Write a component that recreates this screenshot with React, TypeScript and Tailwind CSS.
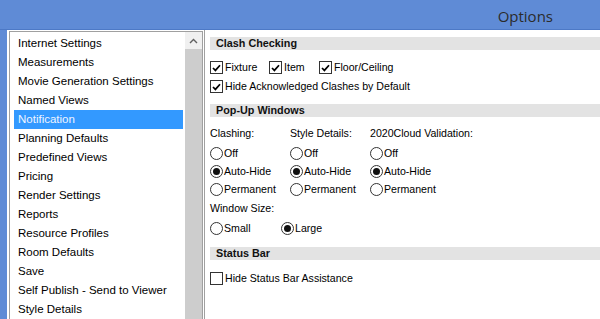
import React from "react";

const items = [
  "Internet Settings",
  "Measurements",
  "Movie Generation Settings",
  "Named Views",
  "Notification",
  "Planning Defaults",
  "Predefined Views",
  "Pricing",
  "Render Settings",
  "Reports",
  "Resource Profiles",
  "Room Defaults",
  "Save",
  "Self Publish - Send to Viewer",
  "Style Details",
];

function Check({ on, label }: { on?: boolean; label: string }) {
  return (
    <div className="flex items-center h-[13px]">
      <div className="w-[13px] h-[13px] border border-[#333] bg-white flex items-center justify-center shrink-0">
        {on && (
          <svg width="9" height="8" viewBox="0 0 9 8">
            <path d="M1 4 L3.4 6.4 L8 1.2" fill="none" stroke="#000" strokeWidth="1.7" />
          </svg>
        )}
      </div>
      <span className="ml-[2px] whitespace-nowrap">{label}</span>
    </div>
  );
}

function Radio({ on, label }: { on?: boolean; label: string }) {
  return (
    <div className="flex items-center">
      <div className="w-[13px] h-[13px] rounded-full border border-[#333] bg-white flex items-center justify-center shrink-0">
        {on && <div className="w-[7px] h-[7px] rounded-full bg-[#111]" />}
      </div>
      <span className="ml-[1px] whitespace-nowrap">{label}</span>
    </div>
  );
}

function Header({ title }: { title: string }) {
  return (
    <div className="h-[13px] bg-[#e3e3e3] pl-[6px] font-bold text-[10.8px] leading-[13px] text-[#111]">
      {title}
    </div>
  );
}

export default function App() {
  const cols = ["Clashing:", "Style Details:", "2020Cloud Validation:"];

  return (
    <div className="w-[600px] h-[319px] bg-white overflow-hidden flex flex-col font-['Liberation_Sans',Arial,sans-serif]">
      {/* title bar */}
      <div className="h-[30px] shrink-0 bg-[#5f8bd6] border-b border-[#4d79c6] flex items-center justify-end pr-[47px] pt-[3px]">
        <span className="font-['Open_Sans',sans-serif] text-[15px] text-[#2b2b2b] leading-none">Options</span>
      </div>

      <div className="flex flex-1 min-h-0">
        <div className="w-[7px] bg-[#5f8bd6] shrink-0" />

        {/* list */}
        <div className="ml-[2px] mt-[1px] w-[194px] shrink-0 border-l border-t border-r border-[#a0a0a0] flex">
          <div className="flex-1 pt-[2px] pl-[4px] text-[11.5px] text-black">
            {items.map((it) => (
              <div
                key={it}
                className={`h-[19px] leading-[19px] pl-[4px] whitespace-nowrap ${
                  it === "Notification" ? "bg-[#3399ff] text-[#eef4ff]" : ""
                }`}
              >
                {it}
              </div>
            ))}
          </div>
          <div className="w-[17px] ml-[2px] flex flex-col shrink-0">
            <div className="h-[17px] bg-[#f0f0f0] flex items-center justify-center">
              <svg width="9" height="6" viewBox="0 0 9 6">
                <path d="M1 5 L4.5 1.5 L8 5" fill="none" stroke="#606060" strokeWidth="1.4" />
              </svg>
            </div>
            <div className="flex-1 bg-[#cdcdcd]" />
          </div>
        </div>

        {/* settings panel */}
        <div className="ml-[1px] flex-1 border-l border-[#a0a0a0] pl-[5px] pt-[7px] text-[10.6px] text-black">
          <Header title="Clash Checking" />
          <div className="mt-[11px] flex">
            <div className="w-[59px]">
              <Check on label="Fixture" />
            </div>
            <div className="w-[50px]">
              <Check on label="Item" />
            </div>
            <Check on label="Floor/Ceiling" />
          </div>
          <div className="mt-[6px]">
            <Check on label="Hide Acknowledged Clashes by Default" />
          </div>

          <div className="mt-[11px]">
            <Header title="Pop-Up Windows" />
          </div>
          <div className="mt-[10px] flex h-[13px] items-center">
            {cols.map((c) => (
              <div key={c} className="w-[80px] whitespace-nowrap">
                {c}
              </div>
            ))}
          </div>
          <div className="mt-[5px]">
            {["Off", "Auto-Hide", "Permanent"].map((opt) => (
              <div key={opt} className="flex h-[18px] items-center">
                {cols.map((c) => (
                  <div key={c} className="w-[80px]">
                    <Radio on={opt === "Auto-Hide"} label={opt} />
                  </div>
                ))}
              </div>
            ))}
          </div>
          <div className="mt-[1px] h-[18px] flex items-center">Window Size:</div>
          <div className="mt-[2px] h-[18px] flex items-center">
            <div className="w-[71px]">
              <Radio label="Small" />
            </div>
            <Radio on label="Large" />
          </div>

          <div className="mt-[9px]">
            <Header title="Status Bar" />
          </div>
          <div className="mt-[12px]">
            <Check label="Hide Status Bar Assistance" />
          </div>
        </div>
      </div>
    </div>
  );
}
